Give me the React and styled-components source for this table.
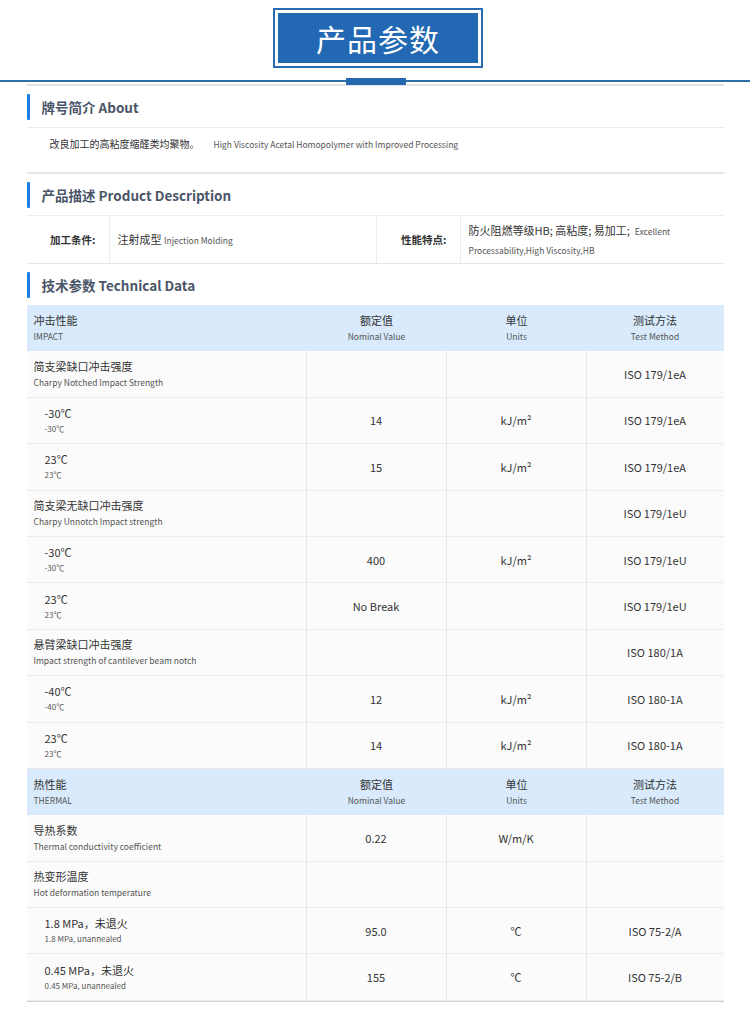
import React from "react";
import styled, { createGlobalStyle } from "styled-components";

const GlobalStyle = createGlobalStyle`
  body {
    margin: 0;
    background: #fff;
    font-family: "Noto Sans CJK SC", "Noto Sans", sans-serif;
    color: #333;
  }
`;

const Page = styled.div`
  width: 750px;
  padding-top: 8px;
`;

const TitleWrap = styled.div`
  display: flex;
  justify-content: center;
  padding-left: 6px;
`;

const TitleBox = styled.div`
  width: 210px;
  height: 60px;
  box-sizing: border-box;
  border: 2px solid #2a6cb1;
  padding: 3px;
`;

const TitleInner = styled.div`
  height: 100%;
  background: #2268b2;
  color: #fff;
  font-size: 30px;
  letter-spacing: 1px;
  display: flex;
  align-items: center;
  justify-content: center;
`;

const Divider = styled.div`
  margin-top: 12px;
  height: 2px;
  background: #2f6ea6;
  display: flex;
  justify-content: center;
  align-items: center;
  padding-left: 2px;
`;

const DividerMark = styled.div`
  width: 60px;
  height: 7px;
  background: #2468b0;
`;

const Content = styled.div`
  width: 697px;
  margin: 2px auto 0;
  border-top: 2px solid #e2e2e4;
`;

const Heading = styled.div`
  height: 41px;
  display: flex;
  align-items: center;
  gap: 12px;
  font-size: 13.5px;
  font-weight: 600;
  color: #4b5569;
  &::before {
    content: "";
    width: 3px;
    height: 26px;
    border-radius: 1px;
    background: #1f7ee0;
  }
`;

const AboutText = styled.div`
  border-top: 1px solid #ececec;
  border-bottom: 2px solid #e4e6ec;
  height: 47px;
  padding: 8px 0 0 23px;
  box-sizing: border-box;
  font-size: 10px;
  color: #333;
  span {
    font-size: 8.5px;
    color: #555;
    margin-left: 14px;
  }
`;

const DescRow = styled.div`
  display: grid;
  grid-template-columns: 83px 266px 85px 1fr;
  height: 47px;
  border-top: 1px solid #eeeeee;
  border-bottom: 1px solid #e6e6e6;
`;

const DescLabel = styled.div`
  display: flex;
  align-items: center;
  justify-content: flex-end;
  padding-right: 13px;
  font-size: 10.5px;
  font-weight: 600;
  color: #333;
  border-right: 1px solid #ececec;
  border-left: ${(p) => (p.$divided ? "1px solid #ececec" : "none")};
`;

const DescValue = styled.div`
  display: flex;
  flex-direction: column;
  justify-content: center;
  padding: 0 8px;
  font-size: 11px;
  line-height: 18px;
  color: #333;
  small {
    font-size: 8.5px;
    color: #555;
  }
`;

const Table = styled.div`
  border-bottom: 1px solid #cfcfcf;
`;

const Row = styled.div`
  display: grid;
  grid-template-columns: 280px 140px 140px 1fr;
  height: 46.4px;
  box-sizing: border-box;
  background: ${(p) => (p.$head ? "#d8eafb" : "#fbfbfb")};
  border-bottom: ${(p) => (p.$head ? "none" : "1px solid #ebebeb")};
`;

const Cell = styled.div`
  display: flex;
  flex-direction: column;
  justify-content: center;
  align-items: ${(p) => (p.$left ? "flex-start" : "center")};
  padding-left: ${(p) => (p.$sub ? "18px" : p.$left ? "7px" : "0")};
  border-right: ${(p) => (p.$head || p.$last ? "none" : "1px solid #e6e6e6")};
  font-size: 11px;
  color: #333;
`;

const Main = styled.div`
  font-size: 11px;
  line-height: 16px;
  color: #333;
`;

const Sub = styled.div`
  font-size: ${(p) => (p.$tiny ? "8px" : "8.5px")};
  line-height: ${(p) => (p.$tiny ? "15px" : "16px")};
  color: #555;
`;

const groups = [
  {
    zh: "冲击性能",
    en: "IMPACT",
    rows: [
      { zh: "简支梁缺口冲击强度", en: "Charpy Notched Impact Strength", value: "", unit: "", method: "ISO 179/1eA" },
      { sub: true, zh: "-30℃", en: "-30℃", value: "14", unit: "kJ/m²", method: "ISO 179/1eA" },
      { sub: true, zh: "23℃", en: "23℃", value: "15", unit: "kJ/m²", method: "ISO 179/1eA" },
      { zh: "简支梁无缺口冲击强度", en: "Charpy Unnotch Impact strength", value: "", unit: "", method: "ISO 179/1eU" },
      { sub: true, zh: "-30℃", en: "-30℃", value: "400", unit: "kJ/m²", method: "ISO 179/1eU" },
      { sub: true, zh: "23℃", en: "23℃", value: "No Break", unit: "", method: "ISO 179/1eU" },
      { zh: "悬臂梁缺口冲击强度", en: "Impact strength of cantilever beam notch", value: "", unit: "", method: "ISO 180/1A" },
      { sub: true, zh: "-40℃", en: "-40℃", value: "12", unit: "kJ/m²", method: "ISO 180-1A" },
      { sub: true, zh: "23℃", en: "23℃", value: "14", unit: "kJ/m²", method: "ISO 180-1A" },
    ],
  },
  {
    zh: "热性能",
    en: "THERMAL",
    rows: [
      { zh: "导热系数", en: "Thermal conductivity coefficient", value: "0.22", unit: "W/m/K", method: "" },
      { zh: "热变形温度", en: "Hot deformation temperature", value: "", unit: "", method: "" },
      { sub: true, zh: "1.8 MPa，未退火", en: "1.8 MPa, unannealed", value: "95.0", unit: "℃", method: "ISO 75-2/A" },
      { sub: true, zh: "0.45 MPa，未退火", en: "0.45 MPa, unannealed", value: "155", unit: "℃", method: "ISO 75-2/B" },
    ],
  },
];

const HeadRow = ({ zh, en }) => (
  <Row $head>
    <Cell $head $left>
      <Main>{zh}</Main>
      <Sub>{en}</Sub>
    </Cell>
    <Cell $head>
      <Main>额定值</Main>
      <Sub>Nominal Value</Sub>
    </Cell>
    <Cell $head>
      <Main>单位</Main>
      <Sub>Units</Sub>
    </Cell>
    <Cell $head>
      <Main>测试方法</Main>
      <Sub>Test Method</Sub>
    </Cell>
  </Row>
);

const App = () => {
  return (
    <Page>
      <GlobalStyle />
      <TitleWrap>
        <TitleBox>
          <TitleInner>产品参数</TitleInner>
        </TitleBox>
      </TitleWrap>
      <Divider>
        <DividerMark />
      </Divider>
      <Content>
        <Heading>牌号简介 About</Heading>
        <AboutText>
          改良加工的高粘度缩醛类均聚物。
          <span>High Viscosity Acetal Homopolymer with Improved Processing</span>
        </AboutText>

        <Heading>产品描述 Product Description</Heading>
        <DescRow>
          <DescLabel>加工条件:</DescLabel>
          <DescValue>
            <div>
              注射成型 <small>Injection Molding</small>
            </div>
          </DescValue>
          <DescLabel $divided>性能特点:</DescLabel>
          <DescValue>
            <div>
              防火阻燃等级HB; 高粘度; 易加工;&nbsp;&nbsp;<small>Excellent</small>
            </div>
            <div>
              <small>Processability,High Viscosity,HB</small>
            </div>
          </DescValue>
        </DescRow>

        <Heading>技术参数 Technical Data</Heading>
        <Table>
          {groups.map((g) => (
            <React.Fragment key={g.en}>
              <HeadRow zh={g.zh} en={g.en} />
              {g.rows.map((r, i) => (
                <Row key={i}>
                  <Cell $left $sub={r.sub}>
                    <Main>{r.zh}</Main>
                    <Sub $tiny={r.sub}>{r.en}</Sub>
                  </Cell>
                  <Cell>{r.value}</Cell>
                  <Cell>{r.unit}</Cell>
                  <Cell $last>{r.method}</Cell>
                </Row>
              ))}
            </React.Fragment>
          ))}
        </Table>
      </Content>
    </Page>
  );
};

export default App;
